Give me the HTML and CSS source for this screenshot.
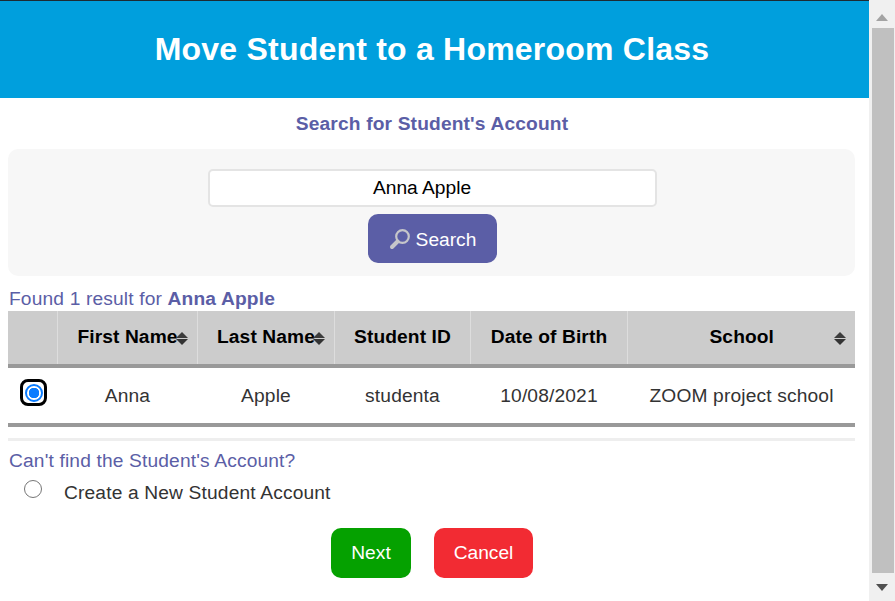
FILE: index.html
```html
<!DOCTYPE html>
<html lang="en">
<head>
<meta charset="utf-8">
<title>Move Student to a Homeroom Class</title>
<link rel="stylesheet" href="styles.css">
</head>
<body>
<div class="page">
  <main class="main">
    <header class="banner"><h1>Move Student to a Homeroom Class</h1></header>
    <h2 class="subtitle">Search for Student's Account</h2>
    <section class="search-box">
      <input class="search-input" type="text" value="Anna Apple">
      <button class="btn btn-search" type="button">
        <svg class="search-icon" width="22" height="22" viewBox="0 0 22 22" aria-hidden="true">
          <circle cx="13.5" cy="8.5" r="6.3" fill="none" stroke="#c6c6ca" stroke-width="2.2"/>
          <path d="M8.5 13.5 L3 19" stroke="#c6c6ca" stroke-width="4" stroke-linecap="round"/>
        </svg>
        <span>Search</span>
      </button>
    </section>
    <p class="found">Found 1 result for <strong>Anna Apple</strong></p>
    <table class="results">
      <colgroup>
        <col class="c1"><col class="c2"><col class="c3"><col class="c4"><col class="c5"><col class="c6">
      </colgroup>
      <thead>
        <tr>
          <th></th>
          <th>First Name<span class="sort sort-near"></span></th>
          <th>Last Name<span class="sort sort-near"></span></th>
          <th>Student ID</th>
          <th>Date of Birth</th>
          <th>School<span class="sort"></span></th>
        </tr>
      </thead>
      <tbody>
        <tr>
          <td class="radio-cell"><span class="focus-ring"><input class="radio" type="radio" name="student" checked></span></td>
          <td>Anna</td>
          <td>Apple</td>
          <td>studenta</td>
          <td>10/08/2021</td>
          <td>ZOOM project school</td>
        </tr>
      </tbody>
    </table>
    <hr class="divider">
    <p class="cant-find">Can't find the Student's Account?</p>
    <label class="create"><input class="radio" type="radio" name="student-new"><span>Create a New Student Account</span></label>
    <div class="actions">
      <button class="btn btn-next" type="button">Next</button>
      <button class="btn btn-cancel" type="button">Cancel</button>
    </div>
  </main>
  <aside class="scrollbar" aria-hidden="true">
    <div class="arrow arrow-up"></div>
    <div class="thumb"></div>
    <div class="arrow arrow-down"></div>
  </aside>
</div>
</body>
</html>
```

FILE: styles.css
```css
* { box-sizing: border-box; }
html, body { margin: 0; height: 601px; overflow: hidden; background: #fff; }
body { font-family: "Liberation Sans", Arial, sans-serif; font-size: 19.2px; letter-spacing: 0.15px; color: #333; }
.page { display: flex; height: 601px; }
.main { width: 869px; flex: none; }

.banner { height: 98px; padding-bottom: 2px; background: #009fdd; border-top: 1px solid #1d2b33; display: flex; align-items: center; justify-content: center; }
.banner h1 { margin: 0 5px 0 0; font-size: 32px; line-height: 36px; font-weight: 700; color: #fff; letter-spacing: 0.22px; }

.subtitle { margin: 14px 5px 0 0; height: 23px; font-size: 19.2px; line-height: 23px; font-weight: 700; text-align: center; color: #5b5ea6; }

.search-box { margin: 14px 14px 0 8px; height: 127px; padding-top: 20px; background: #f7f7f7; border-radius: 10px; display: flex; flex-direction: column; align-items: center; }
.search-input { width: 449px; height: 38px; margin-left: 2px; padding: 0 29px 0 8px; border: 2px solid #e4e4e4; border-radius: 5px; background: #fff; font: inherit; color: #000; text-align: center; }

.btn { border: 1px solid transparent; border-radius: 10px; color: #fff; font: inherit; height: 50px; padding: 0; }
.btn-search { width: 129px; height: 49px; margin-top: 7px; margin-left: 2px; padding: 2px 0 0; background: #5b5ea6; display: flex; align-items: center; justify-content: center; gap: 5px; }
.search-icon { flex: none; margin-top: -2px; }

.found { margin: 11px 0 0 9px; height: 24px; line-height: 23px; color: #5b5ea6; }
.found strong { font-weight: 700; }

.results { margin-left: 8px; width: 847px; border-collapse: collapse; table-layout: fixed; }
.c1 { width: 49px; } .c2 { width: 140px; } .c3 { width: 137px; } .c4 { width: 136px; } .c5 { width: 157px; } .c6 { width: 228px; }
.results th { height: 55px; padding: 0 0 2px 1px; background: #ccc; border-left: 1px solid #ddd; border-bottom: 4px solid #999; color: #000; font-weight: 700; letter-spacing: 0.1px; text-align: center; position: relative; }
.results th:first-child { border-left: 0; }
.results td { height: 59px; padding: 0 0 0 1px; border-bottom: 4px solid #999; text-align: center; }
.sort { position: absolute; right: 9px; top: 21px; width: 12px; height: 13px; }
.sort-near { right: 9px; }
.sort::before, .sort::after { content: ""; position: absolute; left: 0; border-left: 6px solid transparent; border-right: 6px solid transparent; }
.sort::before { top: 0; border-bottom: 6px solid #3c3c3c; }
.sort::after { bottom: 0; border-top: 6px solid #333; }

.radio { appearance: none; margin: 0; width: 18px; height: 18px; border: 1.5px solid #767676; border-radius: 50%; background: #fff; display: block; flex: none; }
.radio:checked { border: 2px solid #0a7cff; background: radial-gradient(circle, #0a7cff 0 5px, #fff 5.5px); }
.radio-cell { position: relative; }
.focus-ring { position: absolute; left: 12px; top: 11px; width: 27px; height: 27px; border: 3px solid #000; border-radius: 8px; display: flex; align-items: center; justify-content: center; }

.divider { margin: 11px 14px 0 8px; height: 3px; border: 0; background: #eee; }
.cant-find { margin: 8px 0 0 9px; height: 23px; line-height: 23px; color: #5b5ea6; }
.create { margin: 9px 0 0 24px; display: flex; align-items: flex-start; gap: 22px; line-height: 24px; }
.create .radio { margin-top: -1px; }

.actions { margin: 23px 0 0 331px; display: flex; gap: 23px; }
.btn-next { width: 80px; background: #05a100; }
.btn-cancel { width: 99px; background: #f22b33; }

.scrollbar { width: 26px; flex: none; height: 601px; background: #f0f0f0; display: flex; flex-direction: column; align-items: flex-end; }
.thumb { width: 22px; height: 545px; background: #c0c0c0; margin-right: 1px; }
.arrow { width: 26px; flex: none; height: 28px; display: flex; align-items: center; justify-content: center; }
.arrow::before { content: ""; border-left: 6px solid transparent; border-right: 6px solid transparent; }
.arrow-up::before { border-bottom: 7px solid #a3a3a3; margin-top: 6px; }
.arrow-down::before { border-top: 7px solid #505050; }
```
